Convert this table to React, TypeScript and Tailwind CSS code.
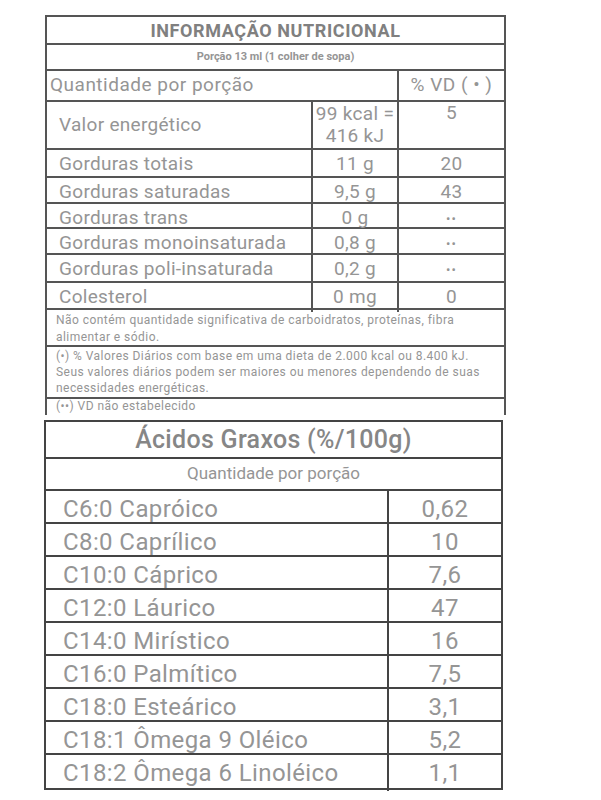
const nutrients: { label: string; amount: string; vd: string; h: string }[] = [
  { label: "Gorduras totais", amount: "11 g", vd: "20", h: "h-[28px]" },
  { label: "Gorduras saturadas", amount: "9,5 g", vd: "43", h: "h-[26px]" },
  { label: "Gorduras trans", amount: "0 g", vd: "**", h: "h-[25px]" },
  { label: "Gorduras monoinsaturada", amount: "0,8 g", vd: "**", h: "h-[26px]" },
  { label: "Gorduras poli-insaturada", amount: "0,2 g", vd: "**", h: "h-[28px]" },
  { label: "Colesterol", amount: "0 mg", vd: "0", h: "h-[27px]" },
];

const acids: [string, string][] = [
  ["C6:0 Capróico", "0,62"],
  ["C8:0 Caprílico", "10"],
  ["C10:0 Cáprico", "7,6"],
  ["C12:0 Láurico", "47"],
  ["C14:0 Mirístico", "16"],
  ["C16:0 Palmítico", "7,5"],
  ["C18:0 Esteárico", "3,1"],
  ["C18:1 Ômega 9 Oléico", "5,2"],
  ["C18:2 Ômega 6 Linoléico", "1,1"],
];

export default function App() {
  return (
    <div
      className="min-h-[800px] w-[601px] bg-white pl-[45px] pt-[15px] text-[#959595]"
      style={{ fontFamily: "Roboto, 'Liberation Sans', sans-serif" }}
    >
      {/* Informação nutricional */}
      <div className="w-[461px] border-x-2 border-t-2 border-[#555]">
        <div className="flex h-[28px] items-center justify-center border-b-2 border-[#555] text-[18px] font-bold tracking-[0.6px] text-[#808080]">
          INFORMAÇÃO NUTRICIONAL
        </div>
        <div className="flex h-[26px] items-center justify-center border-b-2 border-[#555] text-[11px] font-bold">
          Porção 13 ml (1 colher de sopa)
        </div>
        <div className="grid h-[31px] grid-cols-[352px_1fr] border-b-2 border-[#555] text-[19px] tracking-[0.5px]">
          <div className="flex items-center border-r-2 border-[#555] pl-[3px]">Quantidade por porção</div>
          <div className="flex items-center justify-center">% VD ( • )</div>
        </div>
        <div className="grid h-[48px] grid-cols-[266px_86px_1fr] border-b-2 border-[#555] text-[19px] tracking-[0.3px]">
          <div className="flex items-center border-r-2 border-[#555] pl-[12px]">Valor energético</div>
          <div className="flex flex-col items-center justify-center border-r-2 border-[#555] leading-[22px]">
            <span>99 kcal =</span>
            <span>416 kJ</span>
          </div>
          <div className="text-center leading-[22px]">5</div>
        </div>
        {nutrients.map((n) => (
          <div
            key={n.label}
            className={`grid ${n.h} grid-cols-[266px_86px_1fr] border-b-2 border-[#555] text-[19px] tracking-[0.3px]`}
          >
            <div className="flex items-center border-r-2 border-[#555] pl-[12px]">{n.label}</div>
            <div className="flex items-center justify-center border-r-2 border-[#555]">{n.amount}</div>
            <div className={`flex items-center justify-center ${n.vd === "**" ? "text-[13px] tracking-[1px]" : ""}`}>
              {n.vd === "**" ? "••" : n.vd}
            </div>
          </div>
        ))}
        <div className="h-[37px] border-b-2 border-[#555] pl-[9px] pt-[2px] text-[12px] leading-[17px] tracking-[0.45px]">
          Não contém quantidade significativa de carboidratos, proteínas, fibra
          <br />
          alimentar e sódio.
        </div>
        <div className="h-[52px] border-b-2 border-[#555] pl-[9px] pt-[1px] text-[12px] leading-[16px] tracking-[0.45px]">
          (•) % Valores Diários com base em uma dieta de 2.000 kcal ou 8.400 kJ.
          <br />
          Seus valores diários podem ser maiores ou menores dependendo de suas
          <br />
          necessidades energéticas.
        </div>
        <div className="h-[16px] pl-[9px] text-[12px] leading-[15px] tracking-[0.45px]">(••) VD não estabelecido</div>
      </div>

      {/* Ácidos graxos */}
      <div className="mt-[5px] ml-[-1px] w-[459px] border-2 border-[#444]">
        <div className="flex h-[37px] items-center justify-center border-b-2 border-[#444] text-[25px] font-medium tracking-[0.3px] text-[#868686]">
          Ácidos Graxos (%/100g)
        </div>
        <div className="flex h-[32px] items-center justify-center border-b-2 border-[#444] text-[17px]">
          Quantidade por porção
        </div>
        {acids.map(([name, value], i) => (
          <div
            key={name}
            className={`grid h-[33px] grid-cols-[343px_1fr] text-[24px] tracking-[0.4px] ${i < acids.length - 1 ? "border-b-2 border-[#444]" : ""}`}
          >
            <div className="flex items-center border-r-2 border-[#444] pl-[17px]">{name}</div>
            <div className="flex items-center justify-center">{value}</div>
          </div>
        ))}
      </div>
    </div>
  );
}
